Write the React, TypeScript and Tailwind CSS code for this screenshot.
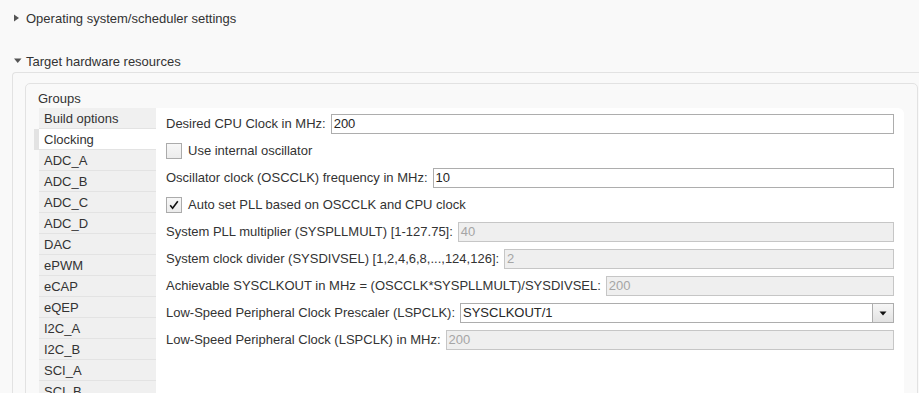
import React from "react";

const groups = [
  "Build options",
  "Clocking",
  "ADC_A",
  "ADC_B",
  "ADC_C",
  "ADC_D",
  "DAC",
  "ePWM",
  "eCAP",
  "eQEP",
  "I2C_A",
  "I2C_B",
  "SCI_A",
  "SCI_B",
  "SCI_C",
  "SPI_A",
];

function TextInput({ value, disabled }: { value: string; disabled?: boolean }) {
  return (
    <div
      className={
        disabled
          ? "flex-1 h-[20px] border border-[#c6c6c6] bg-[#efefef] text-[#a5a5a5] flex items-center pl-[2px]"
          : "flex-1 h-[20px] border border-[#adadad] bg-white text-[#262626] flex items-center pl-[2px]"
      }
    >
      {value}
    </div>
  );
}

function FieldRow({ label, value, disabled }: { label: string; value: string; disabled?: boolean }) {
  return (
    <div className="flex items-center h-[20px] gap-[5px]">
      <span className="whitespace-nowrap">{label}</span>
      <TextInput value={value} disabled={disabled} />
    </div>
  );
}

function CheckRow({ label, checked }: { label: string; checked?: boolean }) {
  return (
    <div className="flex items-center h-[20px] gap-[6px]">
      <div className="w-[16px] h-[16px] border border-[#ababab] bg-gradient-to-b from-[#f7f7f7] to-[#ececec] flex items-center justify-center">
        {checked && (
          <svg width="12" height="12" viewBox="0 0 12 12">
            <path d="M2.2 6.3 L4.6 9.2 L9.8 2.2" fill="none" stroke="#111" strokeWidth="1.6" />
          </svg>
        )}
      </div>
      <span className="whitespace-nowrap">{label}</span>
    </div>
  );
}

export default function App() {
  return (
    <div
      className="w-[919px] h-[393px] overflow-hidden bg-[#f9f9f9] text-[13px] leading-[16px] text-[#333333]"
      style={{ fontFamily: '"Liberation Sans", Arial, sans-serif' }}
    >
      <div className="mt-[10px] h-[16px] flex items-center pl-[14px]">
        <div className="w-[12px] flex items-center">
          <svg width="6" height="8" viewBox="0 0 6 8">
            <path d="M0 0.5 L5 4 L0 7.5 Z" fill="#555555" />
          </svg>
        </div>
        <span className="pt-[2px]">Operating system/scheduler settings</span>
      </div>
      <div className="mt-[27px] h-[16px] flex items-center pl-[14px]">
        <div className="w-[12px] flex items-center">
          <svg width="8" height="6" viewBox="0 0 8 6">
            <path d="M0 0.5 L7.5 0.5 L3.75 5 Z" fill="#555555" />
          </svg>
        </div>
        <span className="pt-[2px]">Target hardware resources</span>
      </div>

      <div className="ml-[12px] mt-[3px] border-l border-t border-[#e2e2e2] rounded-tl-[4px] pl-[12px] pt-[10px] h-[400px]">
        <div className="w-[893px] h-[400px] border border-[#e2e2e2] rounded-[5px] pl-[13px] pr-[13px] pt-[6px]">
          <div className="h-[16px] -ml-[1px] pt-[1px]">Groups</div>
          <div className="mt-[2px] flex items-start">
            <div className="w-[117px] flex flex-col">
              {groups.map((g) =>
                g === "Clocking" ? (
                  <div
                    key={g}
                    className="-ml-[5px] h-[21px] border-l-[5px] border-b border-l-[#e3e3e3] border-b-[#e3e3e3] bg-white pl-[5px] pt-[1px] flex items-center"
                  >
                    {g}
                  </div>
                ) : (
                  <div
                    key={g}
                    className="h-[21px] border-b border-[#e3e3e3] bg-[#f0f0f0] pl-[5px] pt-[1px] flex items-center"
                  >
                    {g}
                  </div>
                )
              )}
            </div>
            <div className="flex-1 h-[300px] bg-white rounded-tr-[6px] pl-[10px] pr-[10px] pt-[6px] flex flex-col gap-[7px]">
              <FieldRow label="Desired CPU Clock in MHz:" value="200" />
              <CheckRow label="Use internal oscillator" />
              <FieldRow label="Oscillator clock (OSCCLK) frequency in MHz:" value="10" />
              <CheckRow label="Auto set PLL based on OSCCLK and CPU clock" checked />
              <FieldRow label="System PLL multiplier (SYSPLLMULT) [1-127.75]:" value="40" disabled />
              <FieldRow
                label="System clock divider (SYSDIVSEL) [1,2,4,6,8,...,124,126]:"
                value="2"
                disabled
              />
              <FieldRow
                label="Achievable SYSCLKOUT in MHz = (OSCCLK*SYSPLLMULT)/SYSDIVSEL:"
                value="200"
                disabled
              />
              <div className="flex items-center h-[20px] gap-[5px]">
                <span className="whitespace-nowrap">Low-Speed Peripheral Clock Prescaler (LSPCLK):</span>
                <div className="flex-1 h-[20px] border border-[#adadad] bg-white text-[#262626] flex items-center">
                  <span className="flex-1 pl-[2px]">SYSCLKOUT/1</span>
                  <div className="w-[21px] h-full border-l border-[#adadad] bg-gradient-to-b from-[#f6f6f6] to-[#e2e2e2] flex items-center justify-center">
                    <svg width="8" height="5" viewBox="0 0 8 5">
                      <path d="M0.5 0.5 L7.5 0.5 L4 4.5 Z" fill="#111111" />
                    </svg>
                  </div>
                </div>
              </div>
              <FieldRow label="Low-Speed Peripheral Clock (LSPCLK) in MHz:" value="200" disabled />
            </div>
          </div>
        </div>
      </div>
    </div>
  );
}
